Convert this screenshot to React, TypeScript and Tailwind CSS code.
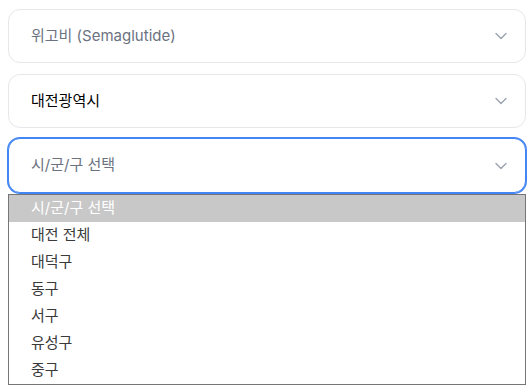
import React from "react";

const font = { fontFamily: '"Inter", "Noto Sans CJK KR", sans-serif' };

function Chevron() {
  return (
    <svg width="12" height="8" viewBox="0 0 12 8" fill="none" className="shrink-0">
      <path d="M1 1.5L6 6.5L11 1.5" stroke="#9ca3af" strokeWidth="1.4" strokeLinecap="round" strokeLinejoin="round" />
    </svg>
  );
}

function Card({ text, dark, focused }: { text: string; dark?: boolean; focused?: boolean }) {
  return (
    <div
      className={`${focused ? "h-[55px]" : "h-[54px]"} flex items-center justify-between pl-[22px] pr-[18px] rounded-xl bg-white border ${
        focused ? "border-[#4285f4] ring-1 ring-[#4285f4]" : "border-[#e5e7eb]"
      }`}
    >
      <span className={`text-[15px] ${dark ? "text-black font-normal" : "text-[#6b7280]"}`}>{text}</span>
      <Chevron />
    </div>
  );
}

const items = ["시/군/구 선택", "대전 전체", "대덕구", "동구", "서구", "유성구", "중구"];

export default function App() {
  return (
    <div className="w-[530px] h-[391px] bg-white overflow-hidden" style={font}>
      <div className="flex flex-col pl-[8px] pr-[4px] pt-[9px]">
        <Card text="위고비 (Semaglutide)" />
        <div className="h-[11px]" />
        <Card text="대전광역시" dark />
        <div className="h-[10px]" />
        <div className="relative">
          <Card text="시/군/구 선택" focused />
          <div className="absolute left-0 right-0 top-[56px] border border-[#767676] bg-white z-10">
            {items.map((it, i) => (
              <div
                key={it}
                className={`h-[27px] flex items-center pl-[22px] text-[15px] ${
                  i === 0 ? "bg-[#c8c8c8] text-white" : "text-[#3a3a3a]"
                }`}
              >
                {it}
              </div>
            ))}
          </div>
        </div>
        <div className="h-[11px]" />
        <div className="h-[54px] rounded-xl border border-[#e5e7eb]" />
      </div>
    </div>
  );
}
